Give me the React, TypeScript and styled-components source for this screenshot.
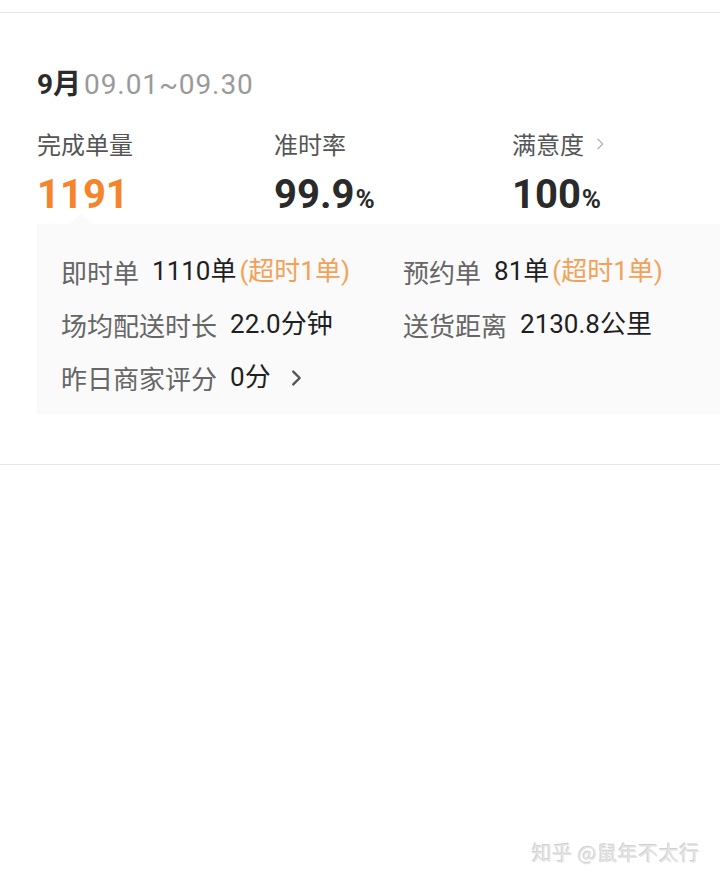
import React from "react";
import styled, { createGlobalStyle } from "styled-components";

const Global = createGlobalStyle`
  html, body { margin: 0; padding: 0; background: #ffffff; }
  body { font-family: Roboto, "Noto Sans CJK SC", sans-serif; }
`;

const Page = styled.div`
  width: 720px;
  height: 882px;
  background: #fff;
  display: flex;
  flex-direction: column;
  position: relative;
  overflow: hidden;
`;

const TopRule = styled.div`
  margin-top: 12px;
  height: 0;
  border-top: 1.5px solid #e4e4e4;
`;

const Card = styled.section`
  padding: 52px 0 50px 37px;
  border-bottom: 1.5px solid #e6e6e6;
`;

const Header = styled.div`
  display: flex;
  align-items: baseline;
  height: 40px;
  line-height: 40px;
`;

const Month = styled.span`
  font-family: Roboto, "Noto Sans CJK SC", sans-serif;
  font-weight: 700;
  font-size: 28px;
  color: #2b2b2b;
  margin-right: 3px;
`;

const Range = styled.span`
  font-family: Roboto, "Noto Sans CJK SC", sans-serif;
  font-size: 28px;
  color: #9a9a9a;
  letter-spacing: 0.9px;
`;

const Stats = styled.div`
  display: grid;
  grid-template-columns: 237px 238px 1fr;
  margin-top: 22px;
`;

const Stat = styled.div`
  display: flex;
  flex-direction: column;
`;

const StatLabel = styled.div`
  font-family: "Noto Sans CJK SC", sans-serif;
  font-size: 24px;
  line-height: 34px;
  color: #555;
  display: flex;
  align-items: center;
  gap: 8px;
`;

const StatValue = styled.div<{ $accent?: boolean }>`
  font-family: Roboto, "Noto Sans CJK SC", sans-serif;
  font-weight: 700;
  font-size: 40px;
  line-height: 50px;
  margin-top: 9px;
  color: ${(p) => (p.$accent ? "#f5842a" : "#2a2a2a")};
`;

const Percent = styled.span`
  font-size: 26px;
  margin-left: 1px;
`;

const Detail = styled.div`
  position: relative;
  margin-top: 0;
  background: #fafafa;
  padding: 28px 0 17px 24px;
  display: grid;
  grid-template-columns: 342px 1fr;
  row-gap: 14px;
`;

const Pointer = styled.div`
  position: absolute;
  top: -10px;
  left: 32px;
  width: 0;
  height: 0;
  border-left: 12px solid transparent;
  border-right: 12px solid transparent;
  border-bottom: 10px solid #fafafa;
`;

const Item = styled.div`
  display: flex;
  align-items: center;
  font-size: 26px;
  line-height: 39px;
  font-family: "Noto Sans CJK SC", sans-serif;
  white-space: nowrap;
`;

const ItemLabel = styled.span`
  color: #666;
  margin-right: 13px;
`;

const ItemValue = styled.span`
  color: #1f1f1f;
  font-family: Roboto, "Noto Sans CJK SC", sans-serif;
`;

const Overtime = styled.span`
  color: #f4a158;
  margin-left: 3px;
  font-family: Roboto, "Noto Sans CJK SC", sans-serif;
`;

const Chevron = ({ size, color, stroke }: { size: number; color: string; stroke: number }) => (
  <svg width={size} height={size} viewBox="0 0 24 24" fill="none">
    <path d="M9 5l7 7-7 7" stroke={color} strokeWidth={stroke} strokeLinecap="round" strokeLinejoin="round" />
  </svg>
);

const ChevronWrap = styled.span`
  display: inline-flex;
  margin-left: 14px;
`;

const Watermark = styled.div`
  position: absolute;
  right: 20px;
  bottom: 15px;
  font-family: "Noto Sans CJK SC", sans-serif;
  font-size: 20px;
  color: #e4e4e4;
  letter-spacing: 0.5px;
  text-shadow: -1px -1px 0 #d0d0d0, 1px 1px 0 #ffffff;
`;

export default function App() {
  return (
    <Page>
      <Global />
      <TopRule />
      <Card>
        <Header>
          <Month>9月</Month>
          <Range>09.01~09.30</Range>
        </Header>
        <Stats>
          <Stat>
            <StatLabel>完成单量</StatLabel>
            <StatValue $accent>1191</StatValue>
          </Stat>
          <Stat>
            <StatLabel>准时率</StatLabel>
            <StatValue>
              99.9<Percent>%</Percent>
            </StatValue>
          </Stat>
          <Stat>
            <StatLabel>
              满意度 <Chevron size={16} color="#b5b5b5" stroke={2} />
            </StatLabel>
            <StatValue>
              100<Percent>%</Percent>
            </StatValue>
          </Stat>
        </Stats>
        <Detail>
          <Pointer />
          <Item>
            <ItemLabel>即时单</ItemLabel>
            <ItemValue>1110单</ItemValue>
            <Overtime>(超时1单)</Overtime>
          </Item>
          <Item>
            <ItemLabel>预约单</ItemLabel>
            <ItemValue>81单</ItemValue>
            <Overtime>(超时1单)</Overtime>
          </Item>
          <Item>
            <ItemLabel>场均配送时长</ItemLabel>
            <ItemValue>22.0分钟</ItemValue>
          </Item>
          <Item>
            <ItemLabel>送货距离</ItemLabel>
            <ItemValue>2130.8公里</ItemValue>
          </Item>
          <Item>
            <ItemLabel>昨日商家评分</ItemLabel>
            <ItemValue>0分</ItemValue>
            <ChevronWrap>
              <Chevron size={22} color="#555" stroke={2.6} />
            </ChevronWrap>
          </Item>
        </Detail>
      </Card>
      <Watermark>知乎 @鼠年不太行</Watermark>
    </Page>
  );
}
